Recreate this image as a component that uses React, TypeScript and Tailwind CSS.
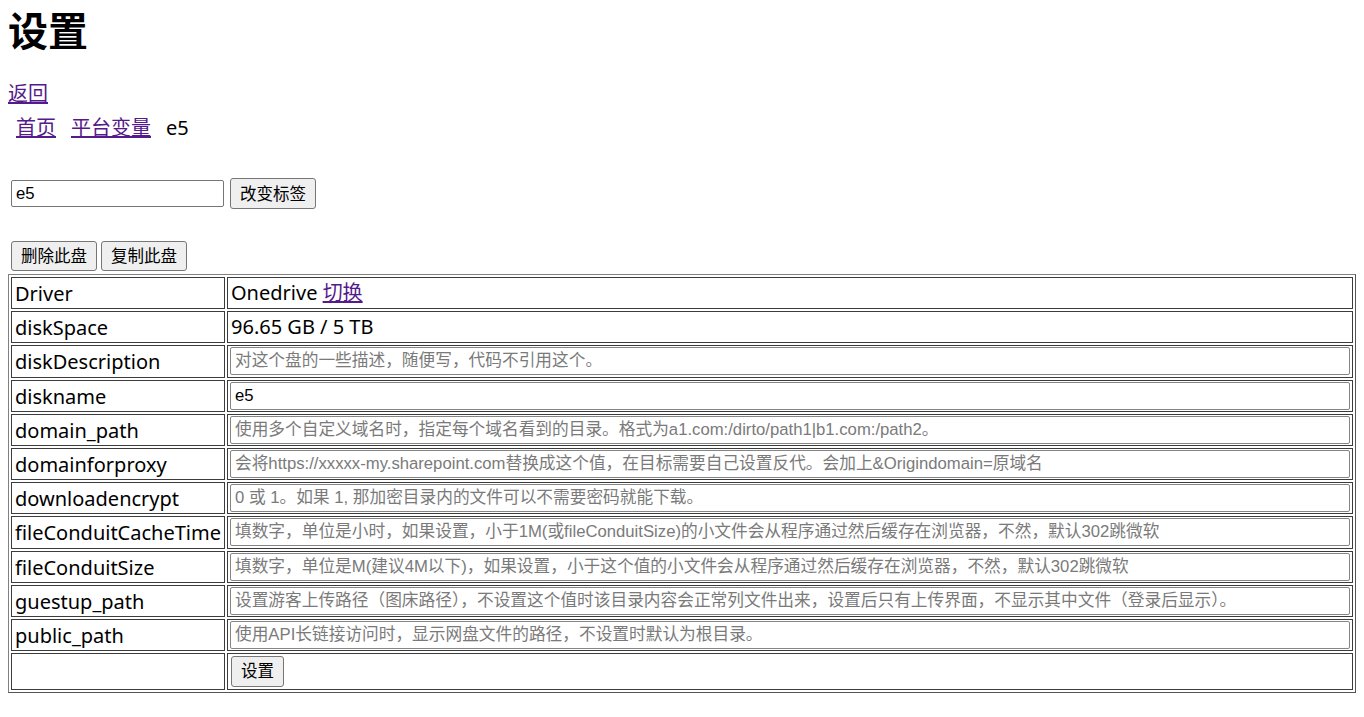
import React, { useState } from 'react';

type Row = {
  key: string;
  text?: string;
  placeholder?: string;
  value?: string;
  driver?: boolean;
};

const rows: Row[] = [
  { key: 'Driver', driver: true },
  { key: 'diskSpace', text: '96.65 GB / 5 TB' },
  { key: 'diskDescription', placeholder: '对这个盘的一些描述，随便写，代码不引用这个。' },
  { key: 'diskname', value: 'e5' },
  { key: 'domain_path', placeholder: '使用多个自定义域名时，指定每个域名看到的目录。格式为a1.com:/dirto/path1|b1.com:/path2。' },
  { key: 'domainforproxy', placeholder: '会将https://xxxxx-my.sharepoint.com替换成这个值，在目标需要自己设置反代。会加上&Origindomain=原域名' },
  { key: 'downloadencrypt', placeholder: '0 或 1。如果 1, 那加密目录内的文件可以不需要密码就能下载。' },
  { key: 'fileConduitCacheTime', placeholder: '填数字，单位是小时，如果设置，小于1M(或fileConduitSize)的小文件会从程序通过然后缓存在浏览器，不然，默认302跳微软' },
  { key: 'fileConduitSize', placeholder: '填数字，单位是M(建议4M以下)，如果设置，小于这个值的小文件会从程序通过然后缓存在浏览器，不然，默认302跳微软' },
  { key: 'guestup_path', placeholder: '设置游客上传路径（图床路径），不设置这个值时该目录内容会正常列文件出来，设置后只有上传界面，不显示其中文件（登录后显示）。' },
  { key: 'public_path', placeholder: '使用API长链接访问时，显示网盘文件的路径，不设置时默认为根目录。' },
];

const btn =
  'bg-[#efefef] border border-[#767676] rounded-[3px] text-[16.5px] leading-[20px] text-black px-[9px] font-["Liberation_Sans","Noto_Sans_CJK_SC",sans-serif]';

const field =
  'block ml-px w-[calc(100%-2px)] h-[28px] border border-[#858585] rounded-[2px] px-[4px] text-[16.7px] text-black placeholder:text-[#7a7a7a] outline-none font-["Liberation_Sans","Noto_Sans_CJK_SC",sans-serif]';

const cell = 'border border-[#3c3c3c] p-px align-middle';

const App = () => {
  const [label, setLabel] = useState('e5');
  const [values, setValues] = useState<Record<string, string>>(() => {
    const v: Record<string, string> = {};
    rows.forEach((r) => {
      if (r.value) v[r.key] = r.value;
    });
    return v;
  });

  return (
    <div className='min-h-screen bg-white px-2 pt-[5px] text-black text-[20px] font-["Noto_Sans","Noto_Sans_CJK_SC",sans-serif]'>
      <h1 className="text-[40px] font-bold leading-[48px] font-['Noto_Sans_CJK_SC',sans-serif]">设置</h1>

      <div className="mt-[28px] leading-[26px]">
        <a href="#" className="text-[#551a8b] underline">返回</a>
      </div>

      <div className="mt-[8px] ml-2 flex gap-[15px] leading-[26px]">
        <a href="#" className="text-[#551a8b] underline">首页</a>
        <a href="#" className="text-[#551a8b] underline">平台变量</a>
        <span>e5</span>
      </div>

      <div className="mt-[37px] ml-[3px] flex items-center gap-[6px]">
        <input
          className="w-[213px] h-[27px] border border-[#767676] rounded-[2px] px-[4px] text-[16.7px] outline-none font-['Liberation_Sans','Noto_Sans_CJK_SC',sans-serif]"
          value={label}
          onChange={(e) => setLabel(e.target.value)}
        />
        <button className={`${btn} h-[31px]`}>改变标签</button>
      </div>

      <div className="mt-[32px] ml-[3px] flex gap-[4px]">
        <button className={`${btn} h-[30px]`}>删除此盘</button>
        <button className={`${btn} h-[30px]`}>复制此盘</button>
      </div>

      <table className="mt-[3px] w-full border-separate border-spacing-[2px] border border-[#808080] border-r-[#555] border-b-[#555]">
        <tbody>
          {rows.map((r) => (
            <tr key={r.key} className="h-[32.2px]">
              <td className={`${cell} w-[214px] pl-[3px] leading-[24px] whitespace-nowrap`}>
                <span className="relative top-px">{r.key}</span>
              </td>
              <td className={`${cell} leading-[24px]`}>
                {r.driver && (
                  <span className="pl-[2px]">
                    Onedrive{' '}
                    <a href="#" className="text-[#551a8b] underline">切换</a>
                  </span>
                )}
                {r.text && <span className="pl-[2px]">{r.text}</span>}
                {!r.driver && !r.text && (
                  <input
                    className={field}
                    placeholder={r.placeholder}
                    value={values[r.key] ?? ''}
                    onChange={(e) => setValues((prev) => ({ ...prev, [r.key]: e.target.value }))}
                  />
                )}
              </td>
            </tr>
          ))}
          <tr className="h-[36.5px]">
            <td className={cell}></td>
            <td className={cell}>
              <button className={`${btn} block h-[31px] ml-[2px]`}>设置</button>
            </td>
          </tr>
        </tbody>
      </table>
    </div>
  );
};

export default App;
